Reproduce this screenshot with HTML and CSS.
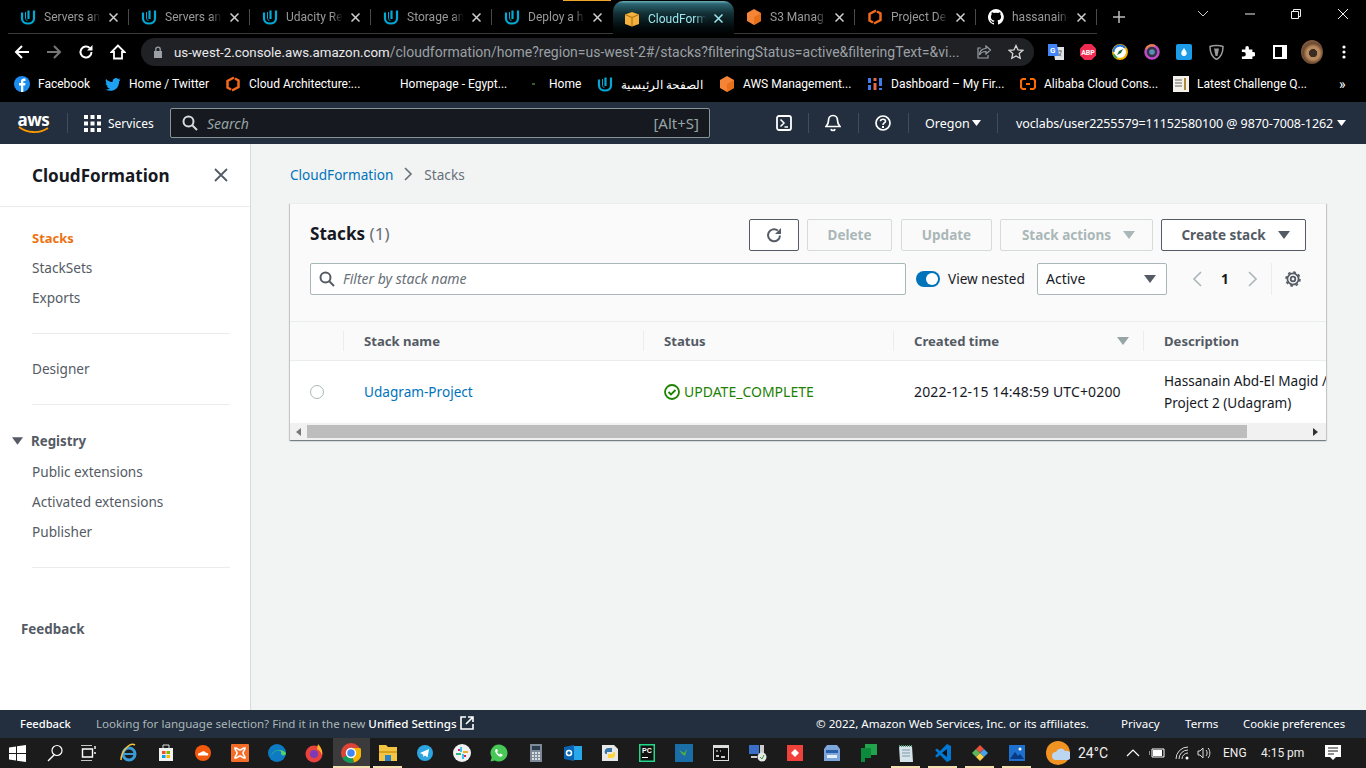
FILE: index.html
```html
<!DOCTYPE html>
<html lang="en">
<head>
<meta charset="utf-8">
<title>CloudFormation - Stacks</title>
<link rel="stylesheet" href="styles.css">
</head>
<body>
<svg class="sprite" aria-hidden="true">
  <symbol id="u" viewBox="0 0 16 16"><path d="M2 3.500v6c0 3 2.500 5 6 5s6-2 6-5V1.500" fill="none" stroke="#02a9d6" stroke-width="2.200"/><path d="M8.500 1.500v8.500" fill="none" stroke="#02a9d6" stroke-width="2.200"/><path d="M5.500 3v6.500c0 1 .6 1.800 2 1.800" fill="none" stroke="#02a9d6" stroke-width="1"/></symbol>
  <symbol id="hex" viewBox="0 0 16 16"><path d="M8 0l7 4v8l-7 4-7-4V4z" fill="#f58536"/><path d="M8 8l7-4v8l-7 4z" fill="#e8701a"/></symbol>
  <symbol id="bracket" viewBox="0 0 16 16"><path d="M9 1.500L2.500 5v6.500L6 13.500M7 14.500l6.500-3.500V4.500L10 2.500" fill="none" stroke="#f2691c" stroke-width="2.500"/></symbol>
  <symbol id="caret" viewBox="0 0 12 8"><path d="M0 0h12L6 8z" fill="currentColor"/></symbol>
</svg>

<header class="tabstrip">
  <div class="tab"><svg class="fav"><use href="#u"/></svg><span class="tab-title">Servers an</span><svg class="tab-x" viewBox="0 0 9 9"><path d="M.5.5l8 8M8.500.5l-8 8"/></svg></div>
  <div class="tab"><svg class="fav"><use href="#u"/></svg><span class="tab-title">Servers an</span><svg class="tab-x" viewBox="0 0 9 9"><path d="M.5.5l8 8M8.500.5l-8 8"/></svg></div>
  <div class="tab"><svg class="fav"><use href="#u"/></svg><span class="tab-title">Udacity Re</span><svg class="tab-x" viewBox="0 0 9 9"><path d="M.5.5l8 8M8.500.5l-8 8"/></svg></div>
  <div class="tab"><svg class="fav"><use href="#u"/></svg><span class="tab-title">Storage an</span><svg class="tab-x" viewBox="0 0 9 9"><path d="M.5.5l8 8M8.500.5l-8 8"/></svg></div>
  <div class="tab tab-nosep"><svg class="fav"><use href="#u"/></svg><span class="tab-title">Deploy a h</span><svg class="tab-x" viewBox="0 0 9 9"><path d="M.5.5l8 8M8.500.5l-8 8"/></svg></div>
  <div class="tab tab-active"><svg class="fav" viewBox="0 0 16 16"><path d="M8 1l7 2.500v9.500l-7 2.500-7-2.500V3.500z" fill="#f4b13d"/><path d="M8 6.500v9M1 3.500l7 3 7-3" fill="none" stroke="#a86d12" stroke-width="1"/></svg><span class="tab-title">CloudForm</span><svg class="tab-x" viewBox="0 0 9 9"><path d="M.5.5l8 8M8.500.5l-8 8"/></svg></div>
  <div class="tab"><svg class="fav"><use href="#hex"/></svg><span class="tab-title">S3 Manag</span><svg class="tab-x" viewBox="0 0 9 9"><path d="M.5.5l8 8M8.500.5l-8 8"/></svg></div>
  <div class="tab"><svg class="fav"><use href="#bracket"/></svg><span class="tab-title">Project De</span><svg class="tab-x" viewBox="0 0 9 9"><path d="M.5.5l8 8M8.500.5l-8 8"/></svg></div>
  <div class="tab"><svg class="fav" viewBox="0 0 16 16"><path fill="#fff" d="M8 0a8 8 0 0 0-2.500 15.600c.4.1.5-.2.5-.4v-1.400c-2.200.5-2.700-1-2.700-1-.4-.9-.9-1.200-.9-1.200-.7-.5.1-.5.1-.5.8.1 1.200.8 1.200.8.7 1.200 1.900.9 2.300.7.1-.5.3-.9.5-1.100-1.800-.2-3.600-.9-3.600-4 0-.9.3-1.600.8-2.100-.1-.2-.4-1 .1-2.100 0 0 .7-.2 2.200.8a7.600 7.600 0 0 1 4 0c1.500-1 2.200-.8 2.200-.8.4 1.100.2 1.900.1 2.100.5.6.8 1.300.8 2.100 0 3.100-1.900 3.700-3.700 3.900.3.3.6.8.6 1.500v2.200c0 .2.1.5.6.4A8 8 0 0 0 8 0z"/></svg><span class="tab-title">hassanain-</span><svg class="tab-x" viewBox="0 0 9 9"><path d="M.5.5l8 8M8.500.5l-8 8"/></svg></div>
  <div class="newtab">
    <svg width="14" height="14" viewBox="0 0 14 14"><path d="M7 1v12M1 7h12" stroke="#bdbdbd" stroke-width="1.500"/></svg>
  </div>
  <div class="winctl">
    <svg width="12" height="8" viewBox="0 0 12 8"><path d="M1 1l5 5 5-5" fill="none" stroke="#ccc"/></svg>
    <svg width="12" height="8" viewBox="0 0 12 8"><path d="M1 4h10" stroke="#eee"/></svg>
    <svg width="12" height="12" viewBox="0 0 12 12"><path d="M1.500 3.500h7v7h-7zM3.500 3.500v-2h7v7h-2" fill="none" stroke="#eee"/></svg>
    <svg width="12" height="12" viewBox="0 0 12 12"><path d="M1 1l10 10M11 1L1 11" stroke="#eee"/></svg>
  </div>
</header>

<div class="toolbar">
  <span class="tool"><svg width="16" height="16" viewBox="0 0 16 16"><path d="M15 8H2M8 2L2 8l6 6" fill="none" stroke="#fff" stroke-width="2"/></svg></span>
  <span class="tool"><svg width="16" height="16" viewBox="0 0 16 16"><path d="M1 8h13M8 2l6 6-6 6" fill="none" stroke="#777" stroke-width="2"/></svg></span>
  <span class="tool"><svg width="16" height="16" viewBox="0 0 16 16"><path d="M13.500 8a5.500 5.500 0 1 1-1.600-3.900" fill="none" stroke="#fff" stroke-width="2"/><path d="M14.500 1v5.500H9z" fill="#fff"/></svg></span>
  <span class="tool"><svg width="16" height="16" viewBox="0 0 16 16"><path d="M8 1.500L1.500 8H4v6.500h8V8h2.500z" fill="none" stroke="#fff" stroke-width="1.800"/></svg></span>
  <div class="omnibox">
    <svg class="lock" width="10" height="12" viewBox="0 0 10 12"><path d="M1 5h8v7H1z" fill="#9aa0a6"/><path d="M2.800 5V3.300a2.200 2.200 0 0 1 4.400 0V5" fill="none" stroke="#9aa0a6" stroke-width="1.300"/></svg>
    <span class="url"><b>us-west-2.console.aws.amazon.com</b>/cloudformation/home?region=us-west-2#/stacks?filteringStatus=active&amp;filteringText=&amp;vi...</span>
    <svg class="omni-act" width="16" height="16" viewBox="0 0 16 16"><path d="M10 2l4.500 4L10 10V7.500C6.500 7.500 4.500 9 3.500 11c0-4 2.500-6.500 6.500-6.500zM12 11v3H2V4h3" fill="none" stroke="#9aa0a6" stroke-width="1.200"/></svg>
    <svg class="omni-act" width="16" height="16" viewBox="0 0 16 16"><path d="M8 1.500l2 4.400 4.800.5-3.600 3.200 1 4.700L8 11.900l-4.200 2.400 1-4.700L1.200 6.400 6 5.900z" fill="none" stroke="#d8d8d8" stroke-width="1.300"/></svg>
  </div>
  <div class="exts">
    <span class="tool"><svg width="16" height="16" viewBox="0 0 16 16"><path d="M5 3h11v13H7z" fill="#dfe3e6"/><path d="M0 0h9l2 12H0z" fill="#4285f4"/><text x="2" y="8.500" class="ext-g">G</text><path d="M10 7h4M12 6v1M11 12c1.500-1 2-2.500 2-5M10.500 9c1 1.500 2 2.500 3 3" fill="none" stroke="#666" stroke-width=".8"/></svg></span>
    <span class="tool"><svg width="18" height="18" viewBox="0 0 18 18"><path d="M5.500 1h7L17 5.500v7L12.500 17h-7L1 12.500v-7z" fill="#ef2b4f"/><text x="9" y="11.500" class="ext-abp">ABP</text></svg></span>
    <span class="tool"><svg width="16" height="16" viewBox="0 0 16 16"><circle cx="8" cy="8" r="7" fill="#fff" stroke="#f4b400" stroke-width="2"/><path d="M1.500 8a6.500 6.500 0 0 1 6.500-6.500 6.500 6.500 0 0 1 5 2.300" fill="none" stroke="#1a73e8" stroke-width="2"/><path d="M1.800 10.500A6.500 6.500 0 0 0 5 13.800" fill="none" stroke="#34a853" stroke-width="2"/><path d="M11 5L9 9 5 11l2-4z" fill="#1d6b3a"/></svg></span>
    <span class="tool"><svg width="16" height="16" viewBox="0 0 16 16"><circle cx="8" cy="8" r="6.500" fill="#334" stroke="#c04bc8" stroke-width="2.500"/><path d="M2 5a6.500 6.500 0 0 1 9-3" fill="none" stroke="#e8843c" stroke-width="2"/><circle cx="8" cy="8" r="2.800" fill="#5a8fb8"/></svg></span>
    <span class="tool"><svg width="16" height="16" viewBox="0 0 16 16"><rect width="16" height="16" rx="2" fill="#1c9be6"/><path d="M8 4c1.800 2.500 2.700 3.700 2.700 5.200a2.700 2.700 0 0 1-5.400 0C5.300 7.700 6.200 6.500 8 4z" fill="#fff"/></svg></span>
    <span class="tool"><svg width="15" height="16" viewBox="0 0 15 16"><path d="M1 2.500C4 1.200 11 1.200 14 2.500 14 8 12 13 7.500 15.500 3 13 1 8 1 2.500z" fill="none" stroke="#9a9a9a" stroke-width="1.500"/><path d="M5 4.500h5L8.500 12h-2z" fill="#9a9a9a"/></svg></span>
    <span class="tool"><svg width="14" height="14" viewBox="0 0 16 16"><path d="M1 5h4V3a2 2 0 0 1 4 0v2h4v3h1a2.500 2.500 0 0 1 0 5h-1v3H1v-3h2a2.500 2.500 0 0 0 0-5H1z" fill="#fff"/></svg></span>
    <span class="tool"><svg width="14" height="14" viewBox="0 0 14 14"><path d="M0 0h14v14H0z" fill="#fff"/><path d="M2 2h7v10H2z" fill="#000"/></svg></span>
    <span class="tool"><span class="avatar"></span></span>
    <span class="tool"><svg width="4" height="14" viewBox="0 0 4 14"><circle cx="2" cy="2" r="1.600" fill="#fff"/><circle cx="2" cy="7" r="1.600" fill="#fff"/><circle cx="2" cy="12" r="1.600" fill="#fff"/></svg></span>
  </div>
</div>

<nav class="bookmarks">
  <a class="bm"><svg class="fav" viewBox="0 0 16 16"><circle cx="8" cy="8" r="8" fill="#1b8cf2"/><path d="M7 16V9.500H5V7h2V5.500C7 3.500 8.200 2.500 10 2.500h1.500V5h-1C9.500 5 9.300 5.400 9.300 6v1h2.200l-.4 2.500H9.300V16z" fill="#fff"/></svg>Facebook</a>
  <a class="bm"><svg class="fav" viewBox="0 0 16 16"><path d="M15.500 3.500c-.6.3-1.100.4-1.800.5.6-.4 1.100-1 1.400-1.700-.6.400-1.300.6-2 .8a3.200 3.200 0 0 0-5.400 2.900C5 6.300 2.700 5 1.100 3.100c-.8 1.500-.4 3.300 1 4.300-.5 0-1-.2-1.400-.4 0 1.600 1.100 2.900 2.600 3.200-.5.100-1 .1-1.400.1.400 1.300 1.600 2.200 3 2.200A6.500 6.500 0 0 1 .5 13.400C6 16.600 14.100 14 14.100 5.400c.6-.5 1-1.100 1.400-1.900z" fill="#1da1f2"/></svg>Home / Twitter</a>
  <a class="bm"><svg class="fav"><use href="#bracket"/></svg>Cloud Architecture:...</a>
  <a class="bm"><span class="fav"></span>Homepage - Egypt...</a>
  <a class="bm"><svg class="fav" viewBox="0 0 16 16"><path d="M7 8h3" stroke="#4a7a3a" stroke-width="1.500"/></svg>Home</a>
  <a class="bm"><svg class="fav"><use href="#u"/></svg><span class="ar" lang="ar" dir="rtl">الصفحة الرئيسية</span></a>
  <a class="bm"><svg class="fav"><use href="#hex"/></svg>AWS Management...</a>
  <a class="bm"><svg class="fav" viewBox="0 0 16 16"><path d="M1 2h3v5H1zM1 9h3v5H1z" fill="#3f7ee8"/><path d="M6.500 2h3v3h-3zM6.500 7h3v7h-3z" fill="#e8694a"/><path d="M12 2h3v8h-3zM12 12h3v2h-3z" fill="#3f7ee8"/></svg>Dashboard – My Fir...</a>
  <a class="bm"><svg class="fav" viewBox="0 0 16 16"><path d="M6 3H2.500L1 4.500v7L2.500 13H6M10 3h3.500L15 4.500v7L13.500 13H10M6 8h4" fill="none" stroke="#ff6a00" stroke-width="2"/></svg>Alibaba Cloud Cons...</a>
  <a class="bm"><svg class="fav" viewBox="0 0 16 16"><path d="M0 0h16v16H0z" fill="#f4f1ea"/><path d="M2 4h7M2 7h7M2 10h7" stroke="#666"/><path d="M11 2h2v12h-2z" fill="#b08a3c"/></svg>Latest Challenge Q...</a>
  <span class="bm-more">»</span>
</nav>

<div class="awsnav">
  <div class="awslogo"><span class="awslogo-text">aws</span><svg width="32" height="8" viewBox="0 0 32 8"><path d="M1 1c8 6 20 7 29 1" fill="none" stroke="#f90" stroke-width="1.800"/></svg></div>
  <i class="navdiv navdiv-logo"></i>
  <svg class="gridicon" width="17" height="17" viewBox="0 0 17 17"><path fill="#fff" d="M0 0h4v4H0zM6.500 0h4v4h-4zM13 0h4v4h-4zM0 6.500h4v4H0zM6.500 6.500h4v4h-4zM13 6.500h4v4h-4zM0 13h4v4H0zM6.500 13h4v4h-4zM13 13h4v4h-4z"/></svg>
  <span class="services">Services</span>
  <div class="navsearch">
    <svg width="16" height="16" viewBox="0 0 16 16"><circle cx="6.500" cy="6.500" r="5" fill="none" stroke="#d5dbdb" stroke-width="2"/><path d="M10 10l5 5" stroke="#d5dbdb" stroke-width="2"/></svg>
    <span class="navsearch-ph">Search</span>
    <span class="navsearch-key">[Alt+S]</span>
  </div>
  <svg class="navicon navicon-shell" width="16" height="16" viewBox="0 0 16 16"><rect x="1" y="1" width="14" height="14" rx="2" fill="none" stroke="#fff" stroke-width="1.800"/><path d="M4.500 4.500L8 8l-3.500 3.500M8.500 12H12" fill="none" stroke="#fff" stroke-width="1.500"/></svg>
  <i class="navdiv navdiv-shell"></i>
  <svg class="navicon" width="16" height="18" viewBox="0 0 16 18"><path d="M8 1.500c3 0 4.500 2.500 4.500 5 0 3 1 4.500 2.500 6H1c1.500-1.500 2.500-3 2.500-6 0-2.500 1.500-5 4.500-5zM6 15c.3 2 3.700 2 4 0" fill="none" stroke="#fff" stroke-width="1.700"/></svg>
  <i class="navdiv"></i>
  <svg class="navicon" width="16" height="16" viewBox="0 0 16 16"><circle cx="8" cy="8" r="7" fill="none" stroke="#fff" stroke-width="1.700"/><path d="M5.500 6.200C5.500 3.500 10.500 3.500 10.500 6.200 10.500 8 8 8 8 10" fill="none" stroke="#fff" stroke-width="1.600"/><path d="M7 11h2v2H7z" fill="#fff"/></svg>
  <i class="navdiv"></i>
  <span class="region">Oregon</span><svg class="navcaret" width="9" height="6"><use href="#caret"/></svg>
  <i class="navdiv navdiv-user"></i>
  <span class="user">voclabs/user2255579=11152580100 @ 9870-7008-1262</span><svg class="navcaret navcaret-user" width="9" height="6"><use href="#caret"/></svg>
</div>

<div class="app">
  <aside class="side">
    <div class="side-head">
      <span class="side-title">CloudFormation</span>
      <svg width="14" height="14" viewBox="0 0 14 14"><path d="M1 1l12 12M13 1L1 13" stroke="#545b64" stroke-width="1.800"/></svg>
    </div>
    <ul class="side-list">
      <li class="side-current">Stacks</li>
      <li>StackSets</li>
      <li>Exports</li>
    </ul>
    <hr class="side-rule">
    <ul class="side-list side-list-one"><li>Designer</li></ul>
    <hr class="side-rule">
    <div class="side-group"><svg width="11" height="8" viewBox="0 0 12 8"><path d="M0 0h12L6 8z" fill="#545b64"/></svg><span>Registry</span></div>
    <ul class="side-list side-list-reg">
      <li>Public extensions</li>
      <li>Activated extensions</li>
      <li>Publisher</li>
    </ul>
    <hr class="side-rule">
    <div class="side-feedback">Feedback</div>
  </aside>

  <main class="content">
    <div class="crumbs"><a class="link">CloudFormation</a>
      <svg width="9" height="14" viewBox="0 0 9 14"><path d="M1 1l6 6-6 6" fill="none" stroke="#687078" stroke-width="1.600"/></svg>
      <span>Stacks</span></div>

    <section class="card">
      <div class="card-head">
        <div class="row-top">
          <h1 class="card-title">Stacks <span>(1)</span></h1>
          <button class="btn btn-refresh"><svg width="16" height="16" viewBox="0 0 16 16"><path d="M14 8.500A6 6 0 1 1 11.800 3.600" fill="none" stroke="#545b64" stroke-width="2"/><path d="M15 1v6H9z" fill="#545b64"/></svg></button>
          <button class="btn btn-off btn-del"><span>Delete</span></button>
          <button class="btn btn-off btn-upd"><span>Update</span></button>
          <button class="btn btn-off btn-act"><span>Stack actions</span><svg width="12" height="8"><use href="#caret"/></svg></button>
          <button class="btn btn-create"><span>Create stack</span><svg width="12" height="8"><use href="#caret"/></svg></button>
        </div>
        <div class="row-filter">
          <div class="filter">
            <svg width="16" height="16" viewBox="0 0 16 16"><circle cx="6.500" cy="6.500" r="5" fill="none" stroke="#545b64" stroke-width="2"/><path d="M10 10l5 5" stroke="#545b64" stroke-width="2"/></svg>
            <span>Filter by stack name</span>
          </div>
          <span class="toggle"><i></i></span>
          <span class="toggle-label">View nested</span>
          <div class="select"><span>Active</span><svg width="12" height="8"><use href="#caret"/></svg></div>
          <div class="pager">
            <svg width="10" height="16" viewBox="0 0 10 16"><path d="M9 1L2 8l7 7" fill="none" stroke="#aab7b8" stroke-width="1.600"/></svg>
            <b>1</b>
            <svg width="10" height="16" viewBox="0 0 10 16"><path d="M1 1l7 7-7 7" fill="none" stroke="#aab7b8" stroke-width="1.600"/></svg>
          </div>
          <div class="gear"><svg width="16" height="16" viewBox="0 0 16 16"><circle cx="8" cy="8" r="2.300" fill="none" stroke="#545b64" stroke-width="1.800"/><circle cx="8" cy="8" r="5.600" fill="none" stroke="#545b64" stroke-width="1.800"/><circle cx="8" cy="8" r="7" fill="none" stroke="#545b64" stroke-width="1.600" stroke-dasharray="2.700 2.800"/></svg></div>
        </div>
      </div>
      <div class="table">
        <div class="th"></div>
        <div class="th"><div class="th-in">Stack name</div></div>
        <div class="th"><div class="th-in">Status</div></div>
        <div class="th"><div class="th-in th-sort"><span>Created time</span><svg width="12" height="8"><use href="#caret"/></svg></div></div>
        <div class="th"><div class="th-in">Description</div></div>
        <div class="td td-radio"><span class="radio"></span></div>
        <div class="td td-name"><a class="link">Udagram-Project</a></div>
        <div class="td td-status"><svg width="16" height="16" viewBox="0 0 16 16"><circle cx="8" cy="8" r="7" fill="none" stroke="#1d8102" stroke-width="1.800"/><path d="M4.500 8l2.500 2.500L11.500 6" fill="none" stroke="#1d8102" stroke-width="1.800"/></svg><span>UPDATE_COMPLETE</span></div>
        <div class="td td-time">2022-12-15 14:48:59 UTC+0200</div>
        <div class="td td-desc">Hassanain Abd-El Magid /<br>Project 2 (Udagram)</div>
      </div>
      <div class="hscroll">
        <svg width="5" height="8" viewBox="0 0 5 8"><path d="M5 0v8L0 4z" fill="#777"/></svg>
        <i class="thumb"></i>
        <svg class="hscroll-r" width="5" height="8" viewBox="0 0 5 8"><path d="M0 0v8l5-4z" fill="#333"/></svg>
      </div>
    </section>
  </main>
</div>

<footer class="foot">
  <span class="foot-fb">Feedback</span>
  <span class="foot-msg">Looking for language selection? Find it in the new <b>Unified Settings</b></span>
  <svg class="foot-ext" width="14" height="14" viewBox="0 0 14 14"><path d="M6 1H1v12h12V8M8 1h5v5M13 1L6 8" fill="none" stroke="#fff" stroke-width="1.600"/></svg>
  <span class="foot-copy">© 2022, Amazon Web Services, Inc. or its affiliates.</span>
  <span class="foot-privacy">Privacy</span>
  <span class="foot-terms">Terms</span>
  <span class="foot-cookie">Cookie preferences</span>
</footer>

<div class="taskbar">
  <span class="ti"><svg width="17" height="17" viewBox="0 0 17 17"><path d="M0 2.500L7 1.500v6.500H0zM8 1.300L17 0v8H8zM0 9h7v6.500l-7-1zM8 9h9v8l-9-1.300z" fill="#fff"/></svg></span>
  <span class="ti"><svg width="16" height="18" viewBox="0 0 16 18"><circle cx="10" cy="6.500" r="5" fill="none" stroke="#fff" stroke-width="1.200"/><path d="M7 11L1 17" stroke="#fff" stroke-width="1.500"/></svg></span>
  <span class="ti ti-view"><svg width="16" height="16" viewBox="0 0 16 16"><path d="M0 0h11M0 16h11M1.500 4h10v8h-10z M14 1v3M14 7v2" fill="none" stroke="#fff" stroke-width="1.400"/></svg></span>
  <span class="ti"><svg width="18" height="20" viewBox="0 0 18 20"><circle cx="9" cy="11" r="6" fill="none" stroke="#3a9bd9" stroke-width="3"/><path d="M4 11h10" stroke="#3a9bd9" stroke-width="2"/><path d="M15 2C10-1 1 8 1 17" fill="none" stroke="#f5c33b" stroke-width="1.500"/></svg></span>
  <span class="ti"><svg width="16" height="18" viewBox="0 0 16 18"><path d="M1 4h14v13H1z" fill="#f1f1f1"/><path d="M5 4V1h6v3" fill="none" stroke="#ddd"/><path d="M4 7h3.500v3H4z" fill="#f25022"/><path d="M8.500 7H12v3H8.500z" fill="#7fba00"/><path d="M4 11h3.500v3H4z" fill="#00a4ef"/><path d="M8.500 11H12v3H8.500z" fill="#ffb900"/></svg></span>
  <span class="ti"><svg width="16" height="16" viewBox="0 0 16 16"><circle cx="8" cy="8" r="8" fill="#f2590d"/><path d="M3 10.500h10c1-2-1-3-2-2.500-.5-2-3.500-2.500-4.500-1H5.500v1H4v.5H3z" fill="#fff"/></svg></span>
  <span class="ti"><svg width="18" height="18" viewBox="0 0 18 18"><rect width="18" height="18" rx="1" fill="#f26e28"/><path d="M4 4c3 0 3 2 5 2s2-2 5-2c0 3-2 3-2 5s2 2 2 5c-3 0-3-2-5-2s-2 2-5 2c0-3 2-3 2-5s-2-2-2-5z" fill="none" stroke="#fff" stroke-width="1.600"/></svg></span>
  <span class="ti"><svg width="18" height="18" viewBox="0 0 18 18"><circle cx="9" cy="9" r="9" fill="#0c7bc4"/><path d="M3 12c2-7 11-8 15-3 0 3-4 3-5 1 2-4-6-6-10 2z" fill="#53d36c"/></svg></span>
  <span class="ti"><svg width="18" height="20" viewBox="0 0 18 20"><circle cx="9" cy="11" r="8.500" fill="#e8423f"/><circle cx="9" cy="11" r="4" fill="#7b3bb8"/><path d="M13 1c3 3 5 7 4 11-1-3-3-5-5-6z" fill="#fdb22a"/></svg></span>
  <span class="ti ti-on"><svg width="20" height="20" viewBox="0 0 20 20"><circle cx="10" cy="10" r="10" fill="#db4437"/><path d="M10 10L1.300 15A10 10 0 0 0 13 19.500z" fill="#0f9d58"/><path d="M10 5h9.300a10 10 0 0 1-6 14.500L10 10z" fill="#f4b400"/><circle cx="10" cy="10" r="4.500" fill="#4285f4" stroke="#fff" stroke-width="1.500"/></svg></span>
  <span class="ti ti-on2"><svg width="18" height="16" viewBox="0 0 18 16"><path d="M0 0h7l2 2h9v14H0z" fill="#f4c542"/><path d="M0 6h18v2H0z" fill="#d8a11d"/><path d="M6 10h6v6H6z" fill="#2a82c8"/></svg></span>
  <span class="ti"><svg width="16" height="16" viewBox="0 0 16 16"><circle cx="8" cy="8" r="8" fill="#2ca5e0"/><path d="M3 8l9-4-1.500 8.500L8 10.500 6.500 12 6 9.500z" fill="#fff"/></svg></span>
  <span class="ti"><svg width="18" height="18" viewBox="0 0 18 18"><circle cx="9" cy="9" r="9" fill="#f1f1f1"/><path d="M8 3v5M10 10v5" stroke="#36c5f0" stroke-width="2"/><path d="M3 10h5" stroke="#2eb67d" stroke-width="2"/><path d="M10 8h5" stroke="#ecb22e" stroke-width="2"/><path d="M5 6h2M11 12h2" stroke="#e01e5a" stroke-width="2"/></svg></span>
  <span class="ti"><svg width="18" height="18" viewBox="0 0 18 18"><path d="M9 .5a8.500 8.500 0 0 0-7.300 12.800L.5 17.500l4.300-1.100A8.500 8.500 0 1 0 9 .5z" fill="#48c857"/><path d="M6 5c-1.500 1-1 3 .5 5s3.500 3 5 2.500c1-.5 1.500-1.500 1-2l-2-1-1 1c-1-.5-2-1.500-2.500-2.500l1-1-1-2z" fill="#fff"/></svg></span>
  <span class="ti"><svg width="12" height="18" viewBox="0 0 12 18"><path d="M0 0h12v18H0z" fill="#7e8a97"/><path d="M2 2h8v4H2z" fill="#2c3e50"/><path d="M2 8h2v2H2zM5 8h2v2H5zM8 8h2v2H8zM2 11h2v2H2zM5 11h2v2H5zM8 11h2v2H8zM2 14h2v2H2zM5 14h2v2H5zM8 14h2v2H8z" fill="#d6dde3"/></svg></span>
  <span class="ti"><svg width="18" height="18" viewBox="0 0 18 18"><path d="M7 2h11v14H7z" fill="#28a8ea"/><path d="M0 3l10-2v16L0 15z" fill="#0a64b4"/><circle cx="5" cy="9" r="2.500" fill="none" stroke="#fff" stroke-width="1.500"/></svg></span>
  <span class="ti"><svg width="18" height="18" viewBox="0 0 18 18"><path d="M1 1h12l4 4v12H1z" fill="#e8e8e8"/><path d="M7 4h4v4H6v2H5c-2 0-2-6 2-6z" fill="#3776ab"/><path d="M11 14H7v-4h5V8h1c2 0 2 6-2 6z" fill="#ffd43b"/></svg></span>
  <span class="ti"><svg width="16" height="18" viewBox="0 0 16 18"><path d="M0 0h16v18H0z" fill="#21d789"/><path d="M1.500 1.500h13v15h-13z" fill="#111"/><path d="M3 13h6v1H3z" fill="#fff"/><text x="3" y="9" class="ti-pc">PC</text></svg></span>
  <span class="ti"><svg width="18" height="18" viewBox="0 0 18 18"><path d="M0 0h18v18H0z" fill="#1a6ea8"/><path d="M4 6l5 3 3-4-2 7-3-2z" fill="#55b03a"/></svg></span>
  <span class="ti"><svg width="16" height="16" viewBox="0 0 16 16"><path d="M0 0h16v16H0z" fill="#ddd"/><path d="M1 3h14v12H1z" fill="#111"/><path d="M3 11h3M8 12h4" stroke="#fff" stroke-width="1.500"/><path d="M3 6h2M7 6h1" stroke="#fff"/></svg></span>
  <span class="ti"><svg width="18" height="18" viewBox="0 0 18 18"><path d="M0 1h10v9H0z" fill="#3a6ec8"/><path d="M2 12h6v2H2zM11 1h4v8h-4z" fill="#ccc"/><circle cx="13" cy="13" r="4.500" fill="#e8e8e8"/><path d="M11 13l2 2 2-4" fill="none" stroke="#3a9a3a"/></svg></span>
  <span class="ti"><svg width="16" height="16" viewBox="0 0 16 16"><path d="M0 0h16v16H0z" fill="#f0413a"/><path d="M8 4l4 4-4 4-4-4z" fill="#fff"/></svg></span>
  <span class="ti"><svg width="16" height="16" viewBox="0 0 16 16"><path d="M3 0h10l3 4v12H0V4z" fill="#7ba7dc"/><path d="M2 5h12v3H2z" fill="#2d5fa8"/><path d="M3 10h10v3H3z" fill="#e6eefa"/></svg></span>
  <span class="ti"><svg width="16" height="18" viewBox="0 0 16 18"><path d="M4 0h12v11H4z" fill="#21a44b"/><path d="M0 4h10v10H4v4H0z" fill="#0a8a3a"/></svg></span>
  <span class="ti ti-on2"><svg width="16" height="18" viewBox="0 0 16 18"><path d="M1 2h13l1 16H2z" fill="#d4e4ea"/><path d="M1 2h13" stroke="#597" stroke-width="2" stroke-dasharray="1 1"/><path d="M4 6h8M4 9h8M4 12h8" stroke="#7d97a2"/></svg></span>
  <span class="ti ti-on2"><svg width="16" height="18" viewBox="0 0 16 18"><path d="M12 0l4 2v14l-4 2L5 11l-3 2.500L0 12l3-3-3-3 2-1.500L5 7z" fill="#0078d4"/><path d="M12 5v8L7 9z" fill="#111"/></svg></span>
  <span class="ti ti-on2"><svg width="18" height="18" viewBox="0 0 18 18"><path d="M9 1l4 4-4 4-4-4z" fill="#e94f3a"/><path d="M13 5l4 4-4 4-4-4z" fill="#45a1e8"/><path d="M5 5l4 4-4 4-4-4z" fill="#5cb85c"/><path d="M9 9l4 4-4 4-4-4z" fill="#f6d04d"/></svg></span>
  <span class="ti ti-on2"><svg width="16" height="16" viewBox="0 0 16 16"><path d="M0 0h16v16H0z" fill="#1d6fd0"/><path d="M1 14l5-7 3 4 2-2 4 5z" fill="#073a80"/><circle cx="11" cy="4" r="1.500" fill="#fff"/></svg></span>
  <span class="weather"><svg width="24" height="26" viewBox="0 0 24 26"><circle cx="12" cy="13" r="12" fill="#f09322"/><path d="M10 20a4 4 0 0 1 0-8 5 5 0 0 1 9-1 4.500 4.500 0 0 1 3 9z" fill="#bcd6f2"/></svg></span>
  <span class="temp">24°C</span>
  <svg class="tray tray-up" width="14" height="8" viewBox="0 0 14 8"><path d="M1 7l6-6 6 6" fill="none" stroke="#fff" stroke-width="1.200"/></svg>
  <svg class="tray tray-bat" width="16" height="12" viewBox="0 0 16 12"><path d="M3 2h12v8H3zM0 4v4" fill="none" stroke="#fff"/><path d="M4 3h9v6H4z" fill="#fff"/></svg>
  <svg class="tray tray-wifi" width="14" height="14" viewBox="0 0 14 14"><path d="M1 13a12 12 0 0 1 12-12M4 13a9 9 0 0 1 9-9M7 13a6 6 0 0 1 6-6" fill="none" stroke="#ddd"/><circle cx="12" cy="12" r="1.500" fill="#fff"/></svg>
  <svg class="tray tray-vol" width="14" height="14" viewBox="0 0 14 14"><path d="M1 5h2l3-3v10L3 9H1z M9 4c1.500 1.500 1.500 4.500 0 6M11 2c2.500 2.500 2.500 7.500 0 10" fill="none" stroke="#ddd"/></svg>
  <span class="lang">ENG</span>
  <span class="clock">4:15 pm</span>
  <svg class="notif" width="16" height="16" viewBox="0 0 16 16"><path d="M0 0h16v12h-5l-3 3-3-3H0z" fill="#fff"/><path d="M3 3h10M3 6h10M3 9h6" stroke="#1b1b1b"/></svg>
</div>
</body>
</html>
```
FILE: styles.css
```css
* { box-sizing: border-box; }
html, body { margin: 0; height: 100%; }
body {
  width: 1366px; height: 768px; overflow: hidden;
  display: flex; flex-direction: column;
  font-family: "Noto Sans", "Open Sans", sans-serif;
  font-size: 13.6px; color: #16191f; background: #f2f3f3;
}
.sprite { position: absolute; width: 0; height: 0; }
svg { display: block; flex: none; }
.fav { width: 16px; height: 16px; flex: none; }

/* browser chrome */
.tabstrip {
  height: 36px; flex: none; display: flex; padding: 0 0 0 8px;
  background: #000; font-family: Roboto, sans-serif; font-size: 12px;
  position: relative;
}
.tabstrip::before {
  content: ""; position: absolute; left: 563px; top: 0; width: 48px; height: 1px; background: #f0a72e;
}
.tab {
  width: 121px; height: 33px; flex: none; display: flex; align-items: center; gap: 8px;
  padding: 0 11px 0 12px; color: #9a9a9a; margin-top: 1px;
  border-bottom: 1px solid #3a3a3a; position: relative;
}
.tab::after {
  content: ""; position: absolute; right: 0; top: 8px; height: 16px; width: 1px; background: #4a4a4a;
}
.tab-nosep::after, .tab-active::after { display: none; }
.tab-title {
  flex: 1; overflow: hidden; white-space: nowrap; min-width: 0;
  -webkit-mask-image: linear-gradient(90deg, #000 80%, transparent);
  mask-image: linear-gradient(90deg, #000 80%, transparent);
}
.tab-x { width: 9px; height: 9px; flex: none; stroke: #d0d0d0; stroke-width: 1.500; fill: none; }
.tab-active {
  color: #9ce6ee; border: 0; border-radius: 10px 10px 0 0;
  background: linear-gradient(#6fb0ba 0, #2d6672 8%, #123036 35%, #030a0c 75%, #000 100%);
  height: 35px; margin-top: 1px; padding-left: 11px;
}
.tab-active .tab-x { stroke: #9ce6ee; }
.newtab { width: 44px; display: flex; justify-content: center; align-items: center; height: 34px; }
.winctl { flex: 1; display: flex; align-items: center; justify-content: space-between; height: 28px; padding: 0 17px 0 56px; }

.toolbar { height: 32px; flex: none; display: flex; align-items: center; padding-left: 6px; background: #000; }
.tool { width: 32px; height: 32px; flex: none; display: flex; align-items: center; justify-content: center; }
.omnibox {
  width: 893px; height: 28px; margin-left: 7px; border-radius: 14px; background: #202124; flex: none;
  display: flex; align-items: center; padding: 0 10px 0 12px; font-family: Roboto, sans-serif; font-size: 14px; color: #9aa0a6;
}
.lock { margin-right: 11px; }
.url { flex: 1; min-width: 0; overflow: hidden; white-space: nowrap; margin-right: 0; }
.url b { font-weight: 400; color: #e8eaed; font-size: 13.300px; }
.omni-act { margin-left: 16px; }
.exts { display: flex; margin-left: 6px; flex: none; }
.ext-g { font: 700 8px Roboto, sans-serif; fill: #fff; }
.ext-abp { font: 700 7px Roboto, sans-serif; fill: #fff; text-anchor: middle; }
.avatar { width: 22px; height: 24px; border-radius: 50%; background: radial-gradient(circle at 55% 55%, #3a2c22 0 22%, #b98a5e 24% 36%, #6d4a32 55%, #a87a58 100%); }

.bookmarks {
  height: 34px; flex: none; background: #000; color: #fff; font-family: Roboto, sans-serif; font-size: 12px;
  display: grid; align-items: center; padding: 0 0 2px 14px;
  grid-template-columns: 91px 120px 151px 149px 72px 122px 148px 153px 153px 166px 20px;
}
.bm { display: flex; align-items: center; gap: 8px; white-space: nowrap; overflow: hidden; }
.ar { font-family: "Noto Sans", sans-serif; font-size: 12px; }
.bm-more { font-size: 14px; }

/* aws console nav */
.awsnav { height: 42px; flex: none; display: flex; align-items: center; background: #232f3e; color: #fff; padding-left: 18px; font-size: 12.500px; }
.awsnav > * { flex: none; }
.awslogo { width: 31px; display: flex; flex-direction: column; align-items: center; }
.awslogo-text { font: 700 17px/13px "Noto Sans", sans-serif; letter-spacing: -.5px; }
.navdiv { width: 1px; height: 20px; background: #414d5c; margin-left: 17px; }
.navdiv-logo { margin-left: 18px; }
.navdiv-shell { margin-left: 16px; }
.gridicon { margin-left: 16px; }
.services { margin-left: 7px; width: 62px; font-size: 12px; }
.navsearch {
  width: 540px; height: 30px; border: 1px solid #879596; border-radius: 2px; background: #16191f;
  display: flex; align-items: center; gap: 9px; padding: 0 10px 0 11px; color: #95a5a6;
}
.navsearch-ph { flex: 1; font-style: italic; font-size: 14px; }
.navsearch-key { font-size: 15px; }
.navicon { margin-left: 16px; }
.navicon-shell { margin-left: 66px; }
.region { margin-left: 16px; width: 41px; }
.navcaret { margin-left: 6px; color: #fff; }
.navdiv-user { margin-left: 16px; }
.user { margin-left: 18px; width: 319px; white-space: nowrap; letter-spacing: -.1px; }
.navcaret-user { margin-left: 2px; }

/* app */
.app { flex: 1; min-height: 0; display: flex; }
.side { width: 251px; flex: none; background: #fff; border-right: 1px solid #d5dbdb; color: #545b64; }
.side-head { height: 63px; display: flex; align-items: center; justify-content: space-between; padding: 0 22px 0 32px; border-bottom: 1px solid #eaeded; }
.side-title { font-size: 17.100px; font-weight: 700; color: #16191f; }
.side-list { list-style: none; margin: 0; padding: 16px 0 20px 32px; }
.side-list li { height: 30px; line-height: 30px; }
.side-list-one { padding-top: 20px; padding-bottom: 20px; }
.side-list-reg { padding-top: 1px; padding-bottom: 20px; }
.side-current { color: #ec7211; font-weight: 700; font-size: 13px; }
.side-rule { height: 1px; border: 0; margin: 0 20px 0 32px; background: #eaeded; }
.side-group { display: flex; align-items: center; gap: 8px; padding: 20px 0 0 12px; height: 51px; font-weight: 700; font-size: 13.300px; }
.side-feedback { margin: 46px 0 0 21px; font-weight: 700; line-height: 30px; font-size: 13.400px; }

.content { flex: 1; min-width: 0; padding: 20px 40px 0 39px; }
.crumbs { display: flex; align-items: center; gap: 11px; height: 20px; color: #687078; margin-bottom: 19px; }
.link { color: #0073bb; }
.card { background: #fff; box-shadow: 0 1px 1px 0 rgba(0,28,36,.35), 1px 1px 1px 0 rgba(0,28,36,.15), -1px 1px 1px 0 rgba(0,28,36,.15); border-top: 1px solid #eaeded; overflow: hidden; }
.card-head { height: 118px; background: #fafafa; padding: 15px 20px 0; border-bottom: 1px solid #eaeded; }
.row-top { display: flex; align-items: center; height: 32px; }
.card-title { margin: 0 0 2px; flex: 1; font-size: 17.100px; line-height: 28px; font-weight: 700; }
.card-title span { font-weight: 400; color: #687078; }
.btn {
  height: 32px; font: 700 13.500px "Noto Sans", sans-serif; border-radius: 2px; padding: 0 0 0 4px; margin-left: 8px;
  background: #fff; border: 1px solid #545b64; color: #545b64;
  display: flex; align-items: center; justify-content: center; gap: 12px;
}
.btn-refresh { width: 50px; margin-left: 0; padding-left: 0; }
.btn-del, .btn-upd { padding-left: 0; }
.btn-off { background: #fafafa; border-color: #d5dbdb; color: #aab7b8; }
.btn-del { width: 85px; }
.btn-upd { width: 91px; margin-left: 9px; }
.btn-act { width: 153px; }
.btn-create { width: 145px; }
.row-filter { display: flex; align-items: center; height: 32px; margin-top: 12px; }
.filter {
  width: 596px; height: 32px; border: 1px solid #aab7b8; border-radius: 2px; background: #fff;
  display: flex; align-items: center; gap: 8px; padding: 0 8px 2px; color: #687078; font-style: italic; font-size: 14px;
}
.filter svg { margin-top: 2px; }
.toggle { width: 24px; height: 16px; border-radius: 8px; background: #0073bb; margin-left: 10px; display: flex; justify-content: flex-end; align-items: center; padding-right: 2px; flex: none; }
.toggle i { width: 12px; height: 12px; border-radius: 50%; background: #fff; }
.toggle-label { margin: 0 0 2px 8px; color: #16191f; width: 89px; white-space: nowrap; }
.select { width: 130px; height: 32px; border: 1px solid #aab7b8; border-radius: 2px; background: #fff; display: flex; align-items: center; justify-content: space-between; padding: 0 10px 0 8px; color: #16191f; font-size: 14px; }
.select span { margin-bottom: 2px; }
.select svg { color: #545b64; }
.pager { display: flex; align-items: center; width: 105px; height: 32px; padding-left: 25px; gap: 18px; border-right: 1px solid #eaeded; }
.pager b { width: 10px; text-align: center; margin-bottom: 2px; }
.gear { padding-left: 13px; }

.table { display: grid; grid-template-columns: 53px 300px 250px 250px 183px; width: 1036px; }
.th { height: 39px; padding: 9px 0 9px; background: #fafafa; border-bottom: 1px solid #eaeded; font-weight: 700; font-size: 13.100px; color: #545b64; }
.th-in { height: 20px; border-left: 1px solid #eaeded; padding-left: 20px; display: flex; align-items: center; white-space: nowrap; }
.th-sort { justify-content: space-between; padding-right: 14px; }
.th-sort svg { color: #95a5a6; }
.td { height: 62px; display: flex; align-items: center; padding: 0 0 2px 21px; white-space: nowrap; overflow: hidden; }
.td-radio { padding: 0 0 0 20px; }
.td-status { gap: 4px; color: #1d8102; font-size: 14px; }
.td-status svg { margin-top: 1px; }
.td-time { font-size: 14px; letter-spacing: .15px; }
.td-desc { display: block; line-height: 22px; padding-top: 9px; }
.radio { width: 14px; height: 14px; border-radius: 50%; border: 1px solid #aab7b8; background: #fff; }
.hscroll { height: 17px; background: #f1f1f1; display: flex; align-items: center; padding: 0 8px 2px 6px; }
.hscroll svg { margin-top: 2px; }
.thumb { width: 940px; height: 13px; background: #bdbdbd; margin: 2px 0 0 6px; }
.hscroll-r { margin-left: auto; }

/* footer */
.foot { height: 28px; flex: none; display: flex; align-items: center; background: #232f3e; color: #fff; font-size: 11.600px; padding: 0 0 2px 20px; }
.foot-fb { width: 76px; font-weight: 500; font-size: 11.200px; }
.foot-msg { color: #aab7b8; white-space: nowrap; }
.foot-msg b { color: #fff; font-weight: 500; }
.foot-ext { margin-left: 3px; }
.foot-copy { margin-left: auto; width: 305px; white-space: nowrap; }
.foot-privacy { width: 64px; }
.foot-terms { width: 58px; }
.foot-cookie { white-space: nowrap; width: 123px; font-size: 11.300px; }

/* taskbar */
.taskbar { height: 30px; flex: none; display: flex; align-items: center; background: #1b1b1b; color: #eee; font-family: Roboto, sans-serif; font-size: 12px; position: relative; }
.taskbar > * { flex: none; }
.ti { width: 37px; height: 30px; display: flex; align-items: center; justify-content: center; position: relative; padding-right: 2px; }
.ti-view { padding-right: 8px; }
.ti-pc { font: 700 7px "Liberation Sans", sans-serif; fill: #fff; }
.ti-on { background: #3b3b3b; }
.ti-on::after, .ti-on2::after { content: ""; position: absolute; left: 3px; right: 5px; bottom: 0; height: 2px; background: #f4dfb0; }
.ti-on::after { left: 0; right: 0; }
.weather { margin-left: 10px; }
.temp { margin-left: 8px; font-size: 14px; white-space: nowrap; width: 40px; }
.tray-up { margin-left: 8px; }
.tray-bat { margin-left: 9px; }
.tray-wifi { margin-left: 10px; }
.tray-vol { margin-left: 8px; }
.lang { margin-left: 12px; width: 38px; font-size: 12px; }
.clock { width: 64px; white-space: nowrap; font-size: 12px; }
.notif { margin-left: 0; }
```
